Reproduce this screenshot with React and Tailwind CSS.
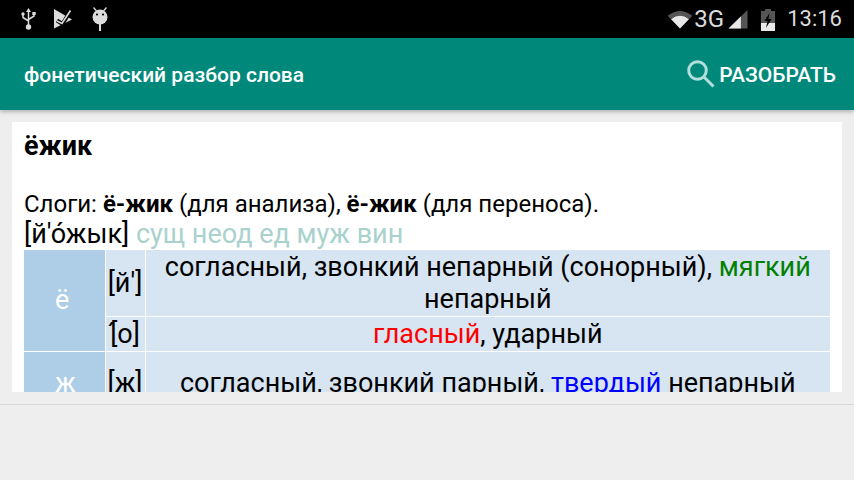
import React from 'react';

const StatusBar = () => (
  <div className="h-[38px] bg-black flex items-center justify-between shrink-0">
    <div className="flex items-center pl-[21px]">
      {/* usb */}
      <svg width="15" height="22" viewBox="0 0 15 22" fill="none">
        <path d="M7.5 0 L10 4 H5 Z" fill="#ddd" />
        <path d="M7.5 3 V19 M2 7 V9.5 L7.5 13 M13 6 V8 L7.5 11.5" stroke="#ddd" strokeWidth="1.5" />
        <circle cx="2" cy="6" r="1.7" fill="#ddd" />
        <rect x="11.3" y="4" width="3.4" height="3" fill="#ddd" />
        <circle cx="7.5" cy="19" r="2.7" fill="#ddd" />
      </svg>
      {/* play store with check */}
      <svg width="19" height="20" viewBox="0 0 19 20" className="ml-[18px]">
        <path d="M0 0 L18 10.5 L0 19.5 Z" fill="#ddd" />
        <path d="M3 11.5 L8.5 15 L17 1" fill="none" stroke="#000" strokeWidth="4" />
        <path d="M3 12 L8 14.5 L16.5 1.5" fill="none" stroke="#ddd" strokeWidth="1.6" />
      </svg>
      {/* android */}
      <svg width="16" height="24" viewBox="0 0 16 24" className="ml-[19px]">
        <path d="M1.5 0.5 L4.5 4 M14.5 0.5 L11.5 4" stroke="#ddd" strokeWidth="1.2" />
        <circle cx="8" cy="10" r="7.5" fill="#ddd" />
        <rect x="7" y="16" width="2" height="8" fill="#ddd" />
        <circle cx="5" cy="7.5" r="1.1" fill="#000" />
        <circle cx="11" cy="7.5" r="1.1" fill="#000" />
      </svg>
    </div>
    <div className="flex items-center text-[#dcdcdc] pr-[12px]">
      <svg width="26" height="19" viewBox="0 0 27 20">
        <path d="M0.5 6 Q13.5 -4 26.5 6 L13.5 19.5 Z" fill="#555" />
        <path d="M4.2 9.7 Q13.5 2.5 22.8 9.7 L13.5 19.5 Z" fill="#e8e8e8" />
      </svg>
      <span className="text-[24px] leading-none ml-[1px]">3G</span>
      <svg width="20" height="19" viewBox="0 0 20 20" className="ml-[4px]">
        <path d="M0 19.5 L20 0 V19.5 Z" fill="#555" />
        <path d="M0 19.5 L13 6.8 V19.5 Z" fill="#e8e8e8" />
      </svg>
      <svg width="14" height="23" viewBox="0 0 14 23" className="ml-[13px]">
        <path d="M4 1 H10 V3 H14 V23 H0 V3 H4 Z" fill="#555" />
        <rect x="0" y="15" width="14" height="8" fill="#e8e8e8" />
        <path d="M8.5 5 L3.5 13 H6.5 L5 20 L10.5 11 H7.5 Z" fill="#000" />
      </svg>
      <span className="text-[22px] leading-none ml-[12px]">13:16</span>
    </div>
  </div>
);

const Toolbar = () => (
  <div className="h-[72px] bg-[#00897b] flex items-center justify-between pl-6 pr-[18px] shrink-0 shadow-[0_2px_4px_rgba(0,0,0,0.25)] relative">
    <span className="text-white text-[21px] font-medium pt-[3px]">фонетический разбор слова</span>
    <div className="flex items-center gap-[3px]">
      <svg width="30" height="30" viewBox="0 0 30 30" fill="none" stroke="#b2dfdb" strokeWidth="3">
        <circle cx="11.5" cy="11.5" r="8.8" />
        <path d="M18 18 L27.5 27.5" />
      </svg>
      <span className="text-white text-[21px] font-medium pt-[3px]">РАЗОБРАТЬ</span>
    </div>
  </div>
);

export default function App() {
  return (
    <div className="w-[854px] h-[480px] bg-[#eeeeee] flex flex-col overflow-hidden font-['Roboto',sans-serif] text-black">
      <StatusBar />
      <Toolbar />
      <div className="h-[295px] pt-3 px-3 shrink-0 border-b border-[#d8d8d8]">
        <div className="h-[270px] bg-white px-3 overflow-hidden">
          <h1 className="text-[27px] font-bold leading-[32px] pt-[8px] box-content">ёжик</h1>
          <p className="text-[24px] leading-[28px] mt-[28px]">
            Слоги: <b>ё-жик</b> (для анализа), <b>ё-жик</b> (для переноса).
          </p>
          <p className="text-[27px] leading-[32px]">
            [й'о́жык] <span className="text-[#a9d2cd]">сущ неод ед муж вин</span>
          </p>
          <table className="w-[806px] table-fixed border-collapse text-[27px] leading-[32px] text-center">
            <colgroup>
              <col className="w-[81px]" />
              <col className="w-[40px]" />
              <col />
            </colgroup>
            <tbody>
              <tr className="h-[66px]">
                <td rowSpan={2} className="bg-[#aecde6] text-white text-left pl-[31px] border-r border-b border-white">ё</td>
                <td className="bg-[#d7e5f3] border-r border-b border-white">[й']</td>
                <td className="bg-[#d7e5f3] border-b border-white">
                  согласный, звонкий непарный (сонорный), <span className="text-[#008000]">мягкий</span> непарный
                </td>
              </tr>
              <tr className="h-[35px]">
                <td className="bg-[#d7e5f3] border-r border-b border-white">[&#769;о]</td>
                <td className="bg-[#d7e5f3] border-b border-white">
                  <span className="text-[#ff0000]">гласный</span>, ударный
                </td>
              </tr>
              <tr className="h-[64px]">
                <td className="bg-[#aecde6] text-white text-left pl-[31px] border-r border-white">ж</td>
                <td className="bg-[#d7e5f3] border-r border-white">[ж]</td>
                <td className="bg-[#d7e5f3]">
                  согласный, звонкий парный, <span className="text-[#0000ff]">твердый</span> непарный
                </td>
              </tr>
            </tbody>
          </table>
        </div>
      </div>
    </div>
  );
}
